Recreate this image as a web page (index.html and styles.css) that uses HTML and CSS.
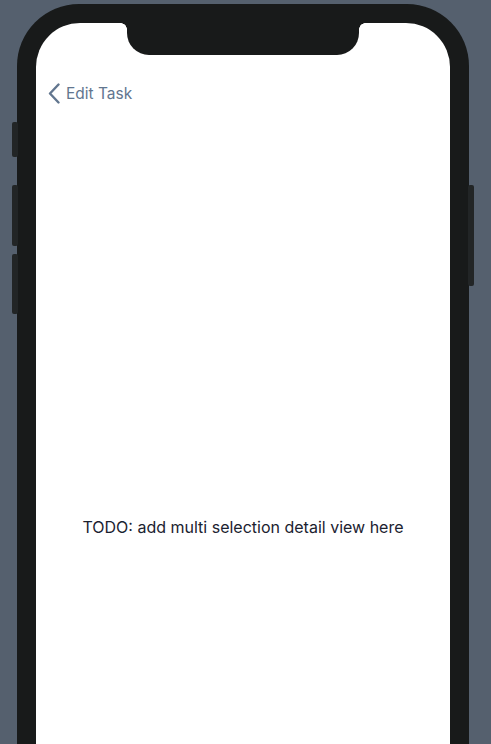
FILE: index.html
```html
<!DOCTYPE html>
<html>
<head>
<meta charset="utf-8">
<link rel="stylesheet" href="styles.css">
</head>
<body>
<div class="device">
  <span class="btn btn-mute"></span>
  <span class="btn btn-vol-up"></span>
  <span class="btn btn-vol-down"></span>
  <span class="btn btn-power"></span>
  <div class="frame">
    <div class="screen">
      <div class="notch"></div>
      <nav class="navbar">
        <a class="back" href="#">
          <svg class="chevron" width="12" height="21" viewBox="0 0 12 21"><path d="M10.5 1.5 L2 10.5 L10.5 19.5" fill="none" stroke="currentColor" stroke-width="2.4" stroke-linecap="round" stroke-linejoin="round"/></svg>
          <span>Edit Task</span>
        </a>
      </nav>
      <main class="content">
        <p class="placeholder">TODO: add multi selection detail view here</p>
      </main>
    </div>
  </div>
</div>
</body>
</html>
```
FILE: styles.css
```css
html, body {
  margin: 0;
  padding: 0;
}
body {
  background: #55606e;
  height: 744px;
  overflow: hidden;
  font-family: Inter, "Noto Sans", sans-serif;
}
.device {
  position: relative;
  width: 452px;
  margin: 4px 0 0 17px;
}
.frame {
  box-sizing: border-box;
  background: #181a1a;
  border-radius: 62px 62px 0 0;
  padding: 19px 19px 0 19px;
  height: 740px;
}
.screen {
  position: relative;
  background: #fff;
  border-radius: 44px 44px 0 0;
  height: 721px;
  display: flex;
  flex-direction: column;
  overflow: hidden;
}
.notch {
  position: absolute;
  left: 91px;
  top: 0;
  width: 232px;
  height: 32px;
  background: #181a1a;
  border-radius: 0 0 22px 22px;
}
.notch::before,
.notch::after {
  content: "";
  position: absolute;
  top: 0;
  width: 6px;
  height: 6px;
  background: radial-gradient(circle at 0 100%, transparent 5.5px, #181a1a 6px);
}
.notch::before {
  left: -6px;
}
.notch::after {
  right: -6px;
  background: radial-gradient(circle at 100% 100%, transparent 5.5px, #181a1a 6px);
}
.btn {
  position: absolute;
  width: 6px;
  background: #222526;
  border-radius: 2px;
}
.btn-mute { left: -5px; top: 118px; height: 35px; }
.btn-vol-up { left: -5px; top: 181px; height: 61px; }
.btn-vol-down { left: -5px; top: 250px; height: 60px; }
.btn-power { right: -5px; top: 181px; height: 101px; }
.navbar {
  box-sizing: border-box;
  height: 108px;
  padding: 60px 0 0 12px;
}
.back {
  display: inline-flex;
  align-items: center;
  gap: 6px;
  color: #62768f;
  text-decoration: none;
  font-size: 15.5px;
}
.chevron {
  display: block;
}
.content {
  flex: 1;
  display: flex;
  justify-content: center;
}
.placeholder {
  margin: 386px 0 0 0;
  font-size: 16px;
  color: #1b2230;
}
```
